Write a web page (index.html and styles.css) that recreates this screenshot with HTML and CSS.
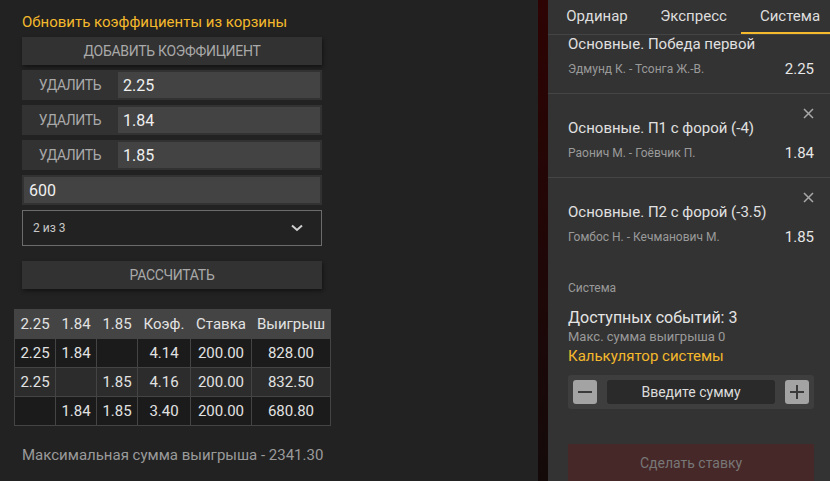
FILE: index.html
```html
<!DOCTYPE html>
<html lang="ru">
<head>
<meta charset="utf-8">
<link rel="stylesheet" href="styles.css">
</head>
<body>
<div class="page">
  <section class="calc">
    <div class="calc-title">Обновить коэффициенты из корзины</div>
    <div class="btn btn-add">ДОБАВИТЬ КОЭФФИЦИЕНТ</div>
    <div class="coef-row"><span class="coef-del">УДАЛИТЬ</span><span class="coef-input">2.25</span></div>
    <div class="coef-row"><span class="coef-del">УДАЛИТЬ</span><span class="coef-input">1.84</span></div>
    <div class="coef-row"><span class="coef-del">УДАЛИТЬ</span><span class="coef-input">1.85</span></div>
    <div class="stake-row"><span class="stake-input">600</span></div>
    <div class="select">
      <span>2 из 3</span>
      <svg class="chev" width="12" height="8" viewBox="0 0 12 8"><polyline points="1,1.5 6,6 11,1.5" fill="none" stroke="#cfcfcf" stroke-width="2"/></svg>
    </div>
    <div class="btn btn-calc">РАССЧИТАТЬ</div>
    <table class="result">
      <thead>
        <tr><th>2.25</th><th>1.84</th><th>1.85</th><th>Коэф.</th><th>Ставка</th><th>Выигрыш</th></tr>
      </thead>
      <tbody>
        <tr class="dark"><td>2.25</td><td>1.84</td><td></td><td>4.14</td><td>200.00</td><td>828.00</td></tr>
        <tr class="light"><td>2.25</td><td></td><td>1.85</td><td>4.16</td><td>200.00</td><td>832.50</td></tr>
        <tr class="dark"><td></td><td>1.84</td><td>1.85</td><td>3.40</td><td>200.00</td><td>680.80</td></tr>
      </tbody>
    </table>
    <div class="max-win">Максимальная сумма выигрыша - 2341.30</div>
  </section>
  <div class="strip"></div>
  <aside class="slip">
    <nav class="tabs">
      <span class="tab t1">Ординар</span>
      <span class="tab t2">Экспресс</span>
      <span class="tab t3 active">Система</span>
    </nav>
    <div class="events">
      <div class="events-inner">
        <div class="event">
          <div class="event-top"><svg class="close" width="11" height="11" viewBox="0 0 11 11"><path d="M1 1L10 10M10 1L1 10" stroke="#a8a8a8" stroke-width="1.5"/></svg></div>
          <div class="event-title">Основные. Победа первой</div>
          <div class="event-sub"><span class="teams">Эдмунд К. - Тсонга Ж.-В.</span><span class="odds">2.25</span></div>
        </div>
        <div class="event">
          <div class="event-top"><svg class="close" width="11" height="11" viewBox="0 0 11 11"><path d="M1 1L10 10M10 1L1 10" stroke="#a8a8a8" stroke-width="1.5"/></svg></div>
          <div class="event-title">Основные. П1 с форой (-4)</div>
          <div class="event-sub"><span class="teams">Раонич М. - Гоёвчик П.</span><span class="odds">1.84</span></div>
        </div>
        <div class="event">
          <div class="event-top"><svg class="close" width="11" height="11" viewBox="0 0 11 11"><path d="M1 1L10 10M10 1L1 10" stroke="#a8a8a8" stroke-width="1.5"/></svg></div>
          <div class="event-title">Основные. П2 с форой (-3.5)</div>
          <div class="event-sub"><span class="teams">Гомбос Н. - Кечманович М.</span><span class="odds">1.85</span></div>
        </div>
      </div>
    </div>
    <div class="system">
      <div class="sys-label">Система</div>
      <div class="sys-count">Доступных событий: 3</div>
      <div class="sys-max">Макс. сумма выигрыша 0</div>
      <div class="sys-link">Калькулятор системы</div>
      <div class="amount">
        <span class="step"><svg width="24" height="24" viewBox="0 0 24 24"><path d="M5 12H19" stroke="#3a3a3a" stroke-width="2"/></svg></span>
        <span class="amount-input">Введите сумму</span>
        <span class="step"><svg width="24" height="24" viewBox="0 0 24 24"><path d="M5 12H19M12 5V19" stroke="#3a3a3a" stroke-width="2"/></svg></span>
      </div>
      <div class="bet-btn">Сделать ставку</div>
    </div>
  </aside>
</div>
</body>
</html>
```
FILE: styles.css
```css
* { box-sizing: border-box; }
html, body { margin: 0; padding: 0; height: 100%; }
body {
  background: #222222;
  font-family: Roboto, "Liberation Sans", Arial, sans-serif;
  color: #dddddd;
  overflow: hidden;
}
.page { display: flex; height: 481px; }

.calc {
  width: 538px;
  flex: none;
  padding: 12px 0 0 22px;
  background: #222222;
}
.calc-title {
  color: #f4b92c;
  font-size: 15px;
  line-height: 20px;
  margin-bottom: 5px;
}
.btn {
  width: 300px;
  height: 28px;
  background: #323232;
  color: #a9a9a9;
  font-size: 14px;
  letter-spacing: -0.3px;
  display: flex;
  align-items: center;
  justify-content: center;
  box-shadow: 1px 2px 4px rgba(0,0,0,0.45);
}
.btn-add { margin-bottom: 5px; }
.coef-row {
  width: 300px;
  height: 30px;
  background: #323232;
  display: flex;
  margin-bottom: 5px;
}
.coef-del {
  width: 96px;
  display: flex;
  align-items: center;
  justify-content: center;
  color: #a9a9a9;
  font-size: 14px;
  letter-spacing: -0.4px;
}
.coef-input {
  flex: 1;
  margin: 2px 2px 2px 0;
  background: #434343;
  color: #f0f0f0;
  font-size: 16px;
  display: flex;
  align-items: center;
  padding-left: 5px;
}
.stake-row {
  width: 300px;
  height: 30px;
  background: #323232;
  padding: 2px;
  display: flex;
  margin-bottom: 5px;
}
.stake-input {
  flex: 1;
  background: #434343;
  color: #f0f0f0;
  font-size: 16px;
  display: flex;
  align-items: center;
  padding-left: 5px;
}
.select {
  width: 300px;
  height: 36px;
  border: 1px solid #6c6c6c;
  display: flex;
  align-items: center;
  justify-content: space-between;
  padding: 0 18px 0 10px;
  color: #c8c8c8;
  font-size: 12px;
  margin-bottom: 15px;
}
.btn-calc { margin-bottom: 20px; }

.result {
  margin-left: -8px;
  border-collapse: collapse;
  font-size: 15px;
  color: #e2e2e2;
}
.result th, .result td {
  height: 29px;
  padding: 0;
  text-align: center;
  font-weight: normal;
  border: 1px solid #444444;
}
.result th { background: #444444; }
.result th:nth-child(1), .result td:nth-child(1) { width: 41px; }
.result th:nth-child(2), .result td:nth-child(2) { width: 41px; }
.result th:nth-child(3), .result td:nth-child(3) { width: 41px; }
.result th:nth-child(4), .result td:nth-child(4) { width: 53px; }
.result th:nth-child(5), .result td:nth-child(5) { width: 61px; }
.result th:nth-child(6), .result td:nth-child(6) { width: 79px; }
.result tr.dark td { background: #1b1b1b; }
.result tr.light td { background: #2c2c2c; }
.max-win {
  margin-top: 20px;
  color: #9a9a9a;
  font-size: 15px;
  line-height: 18px;
}

.strip {
  width: 10px;
  flex: none;
  background: linear-gradient(#2e0303, #140a0a);
}

.slip {
  width: 282px;
  flex: none;
  background: #333333;
  overflow: hidden;
  display: flex;
  flex-direction: column;
}
.tabs {
  display: flex;
  height: 35px;
  border-bottom: 1px solid #444444;
  flex: none;
}
.tab {
  flex: none;
  height: 34px;
  font-size: 15px;
  color: #dedede;
  display: flex;
  align-items: center;
  justify-content: center;
  padding-bottom: 2px;
}
.t1 { width: 98px; }
.t2 { width: 95px; }
.t3 { width: 98px; }
.tab.active { border-bottom: 2px solid #f4b92c; padding-bottom: 0; }

.events { height: 226px; overflow: hidden; flex: none; }
.events-inner { margin-top: -25px; }
.event {
  padding: 12px 16px 16px 20px;
  border-bottom: 1px solid #454545;
}
.event-top { height: 12px; display: flex; justify-content: flex-end; }
.close { margin-top: 2px; }
.event-title {
  font-size: 15px;
  line-height: 20px;
  color: #e0e0e0;
}
.event-sub {
  margin-top: 7px;
  display: flex;
  justify-content: space-between;
  align-items: center;
  line-height: 16px;
}
.teams { font-size: 12px; color: #9a9a9a; }
.odds { font-size: 15px; color: #e6e6e6; font-weight: normal; }

.system { padding: 20px 16px 0 20px; }
.sys-label { font-size: 12px; line-height: 14px; color: #9a9a9a; }
.sys-count { margin-top: 13px; font-size: 16px; line-height: 20px; color: #e4e4e4; }
.sys-max { margin-top: 1px; font-size: 13px; line-height: 16px; color: #9a9a9a; }
.sys-link { margin-top: 2px; font-size: 15px; line-height: 18px; color: #f4b92c; }
.amount {
  margin-top: 10px;
  height: 34px;
  background: #3e3e3e;
  border-radius: 3px;
  padding: 5px;
  display: flex;
  gap: 10px;
}
.step {
  width: 24px;
  height: 24px;
  background: #a3a3a3;
  border-radius: 3px;
  display: flex;
}
.amount-input {
  flex: 1;
  background: #2a2a2a;
  border-radius: 3px;
  display: flex;
  align-items: center;
  justify-content: center;
  font-size: 14px;
  color: #dcdcdc;
}
.bet-btn {
  margin-top: 35px;
  height: 38px;
  background: #472828;
  color: #777777;
  font-size: 14px;
  display: flex;
  align-items: center;
  justify-content: center;
}
```
